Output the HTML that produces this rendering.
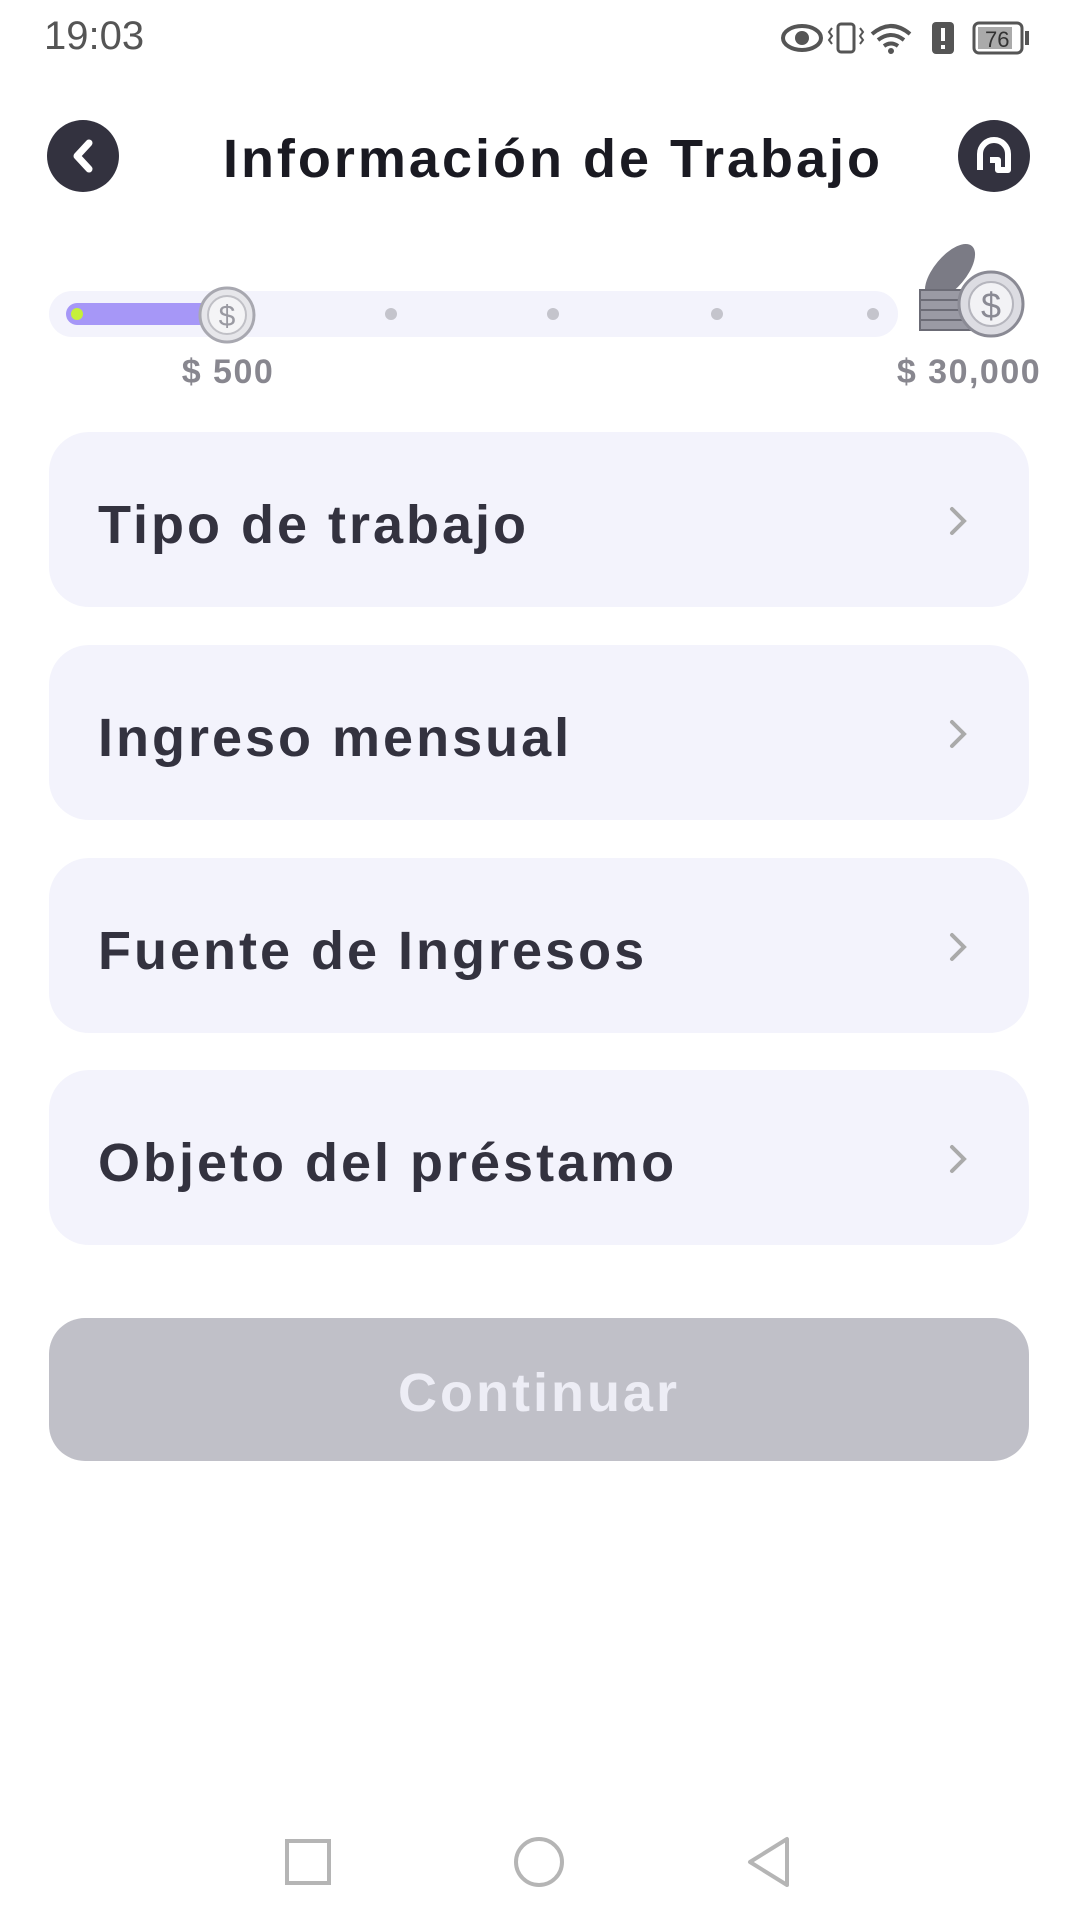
<!DOCTYPE html>
<html><head><meta charset="utf-8"><style>
*{margin:0;padding:0;box-sizing:border-box}
body{width:1080px;height:1920px;background:#fff;position:relative;overflow:hidden;font-family:"Liberation Sans",sans-serif}
.abs{position:absolute}
.card{position:absolute;left:49px;width:980px;height:175px;border-radius:40px;background:#f3f3fc}
.card span{position:absolute;left:49px;top:50%;transform:translateY(-42%);font-size:54px;font-weight:bold;color:#33323f;letter-spacing:3px}
.card svg{position:absolute;right:58px;top:72px}
.dot{position:absolute;width:12px;height:12px;border-radius:50%;background:#c4c4cc;top:308px}
</style></head><body>
<div class="abs" style="left:44px;top:14px;font-size:40px;color:#555">19:03</div>
<svg class="abs" style="left:780px;top:18px" width="260" height="40" viewBox="0 0 260 40">
<ellipse cx="22" cy="20" rx="19" ry="12" fill="none" stroke="#555" stroke-width="4"/><circle cx="22" cy="20" r="7" fill="#555"/>
<rect x="58" y="6" width="16" height="28" rx="3" fill="none" stroke="#555" stroke-width="3"/>
<path d="M52 10 l-3 4 3 4 -3 4 3 4M80 10 l3 4 -3 4 3 4 -3 4" fill="none" stroke="#555" stroke-width="2"/>
<path d="M92 16 q19 -16 38 0M98 22 q13 -10 26 0M104 28 q7 -5 14 0" fill="none" stroke="#555" stroke-width="4"/><circle cx="111" cy="33" r="3" fill="#555"/>
<rect x="152" y="4" width="22" height="32" rx="4" fill="#555"/><rect x="161" y="10" width="4" height="13" fill="#fff"/><rect x="161" y="27" width="4" height="4" fill="#fff"/>
<rect x="194" y="5" width="48" height="30" rx="5" fill="none" stroke="#555" stroke-width="3"/><rect x="198" y="9" width="34" height="22" fill="#aaa"/>
<text x="205" y="29" font-size="22" fill="#333" font-family="Liberation Sans">76</text><rect x="245" y="13" width="4" height="14" fill="#555"/>
</svg>
<svg class="abs" style="left:47px;top:120px" width="72" height="72"><circle cx="36" cy="36" r="36" fill="#33323f"/><path d="M42 23 L30 36 L42 49" fill="none" stroke="#fff" stroke-width="7" stroke-linecap="round" stroke-linejoin="round"/></svg>
<div class="abs" style="left:0;width:1106px;text-align:center;top:128px;font-size:54px;font-weight:bold;color:#1a1a22;letter-spacing:3px">Información de Trabajo</div>
<svg class="abs" style="left:958px;top:120px" width="72" height="72"><circle cx="36" cy="36" r="36" fill="#33323f"/><path d="M22 50 V34 a14 14 0 0 1 28 0 V50 H40 V40 H32" fill="none" stroke="#fff" stroke-width="6" stroke-linejoin="round"/></svg>
<div class="abs" style="left:49px;top:291px;width:849px;height:46px;border-radius:23px;background:#f3f3fc"></div>
<div class="abs" style="left:66px;top:303px;width:165px;height:22px;border-radius:11px;background:#a697f7"></div>
<div class="abs" style="left:71px;top:308px;width:12px;height:12px;border-radius:50%;background:#c6f03a"></div>
<div class="dot" style="left:385px"></div><div class="dot" style="left:547px"></div><div class="dot" style="left:711px"></div><div class="dot" style="left:867px"></div>
<svg class="abs" style="left:198px;top:286px" width="58" height="58"><circle cx="29" cy="29" r="27" fill="#e6e6ea" stroke="#a8a8b0" stroke-width="3"/><circle cx="29" cy="29" r="19" fill="#f4f4f6" stroke="#c0c0c6" stroke-width="2"/><text x="29" y="40" font-size="30" text-anchor="middle" fill="#9a9aa2" font-family="Liberation Sans">$</text></svg>
<svg class="abs" style="left:916px;top:238px" width="112" height="100">
<ellipse cx="34" cy="34" rx="16" ry="34" transform="rotate(40 34 34)" fill="#7b7b85"/>
<g fill="#9a9aa4" stroke="#6b6b75" stroke-width="2"><rect x="4" y="52" width="50" height="10"/><rect x="4" y="62" width="50" height="10"/><rect x="4" y="72" width="50" height="10"/><rect x="4" y="82" width="50" height="10"/></g>
<circle cx="75" cy="66" r="32" fill="#dcdce2" stroke="#8a8a94" stroke-width="3"/><circle cx="75" cy="66" r="22" fill="#f2f2f5" stroke="#b5b5bd" stroke-width="2"/><text x="75" y="80" font-size="36" text-anchor="middle" fill="#8a8a94" font-family="Liberation Sans">$</text></svg>
<div class="abs" style="left:138px;width:180px;text-align:center;top:353px;font-size:34px;font-weight:bold;color:#88878f;letter-spacing:1.5px">$ 500</div>
<div class="abs" style="left:869px;width:200px;text-align:center;top:353px;font-size:34px;font-weight:bold;color:#88878f;letter-spacing:1.5px">$ 30,000</div>
<div class="card" style="top:432px"><span>Tipo de trabajo</span><svg width="24" height="34"><path d="M5 5 L17 17 L5 29" fill="none" stroke="#aaa" stroke-width="4" stroke-linecap="round"/></svg></div>
<div class="card" style="top:645px"><span>Ingreso mensual</span><svg width="24" height="34"><path d="M5 5 L17 17 L5 29" fill="none" stroke="#aaa" stroke-width="4" stroke-linecap="round"/></svg></div>
<div class="card" style="top:858px"><span>Fuente de Ingresos</span><svg width="24" height="34"><path d="M5 5 L17 17 L5 29" fill="none" stroke="#aaa" stroke-width="4" stroke-linecap="round"/></svg></div>
<div class="card" style="top:1070px"><span>Objeto del préstamo</span><svg width="24" height="34"><path d="M5 5 L17 17 L5 29" fill="none" stroke="#aaa" stroke-width="4" stroke-linecap="round"/></svg></div>
<div class="abs" style="left:49px;top:1318px;width:980px;height:143px;border-radius:36px;background:#c0c0c8;color:#ededf5;font-size:54px;font-weight:bold;text-align:center;line-height:150px;letter-spacing:3px">Continuar</div>
<svg class="abs" style="left:0;top:1830px" width="1080" height="64">
<rect x="287" y="11" width="42" height="42" fill="none" stroke="#b5b5b5" stroke-width="4"/>
<circle cx="539" cy="32" r="23" fill="none" stroke="#b5b5b5" stroke-width="4"/>
<path d="M787 9 L787 55 L750 32 Z" fill="none" stroke="#b5b5b5" stroke-width="4" stroke-linejoin="round"/>
</svg>
</body></html>
